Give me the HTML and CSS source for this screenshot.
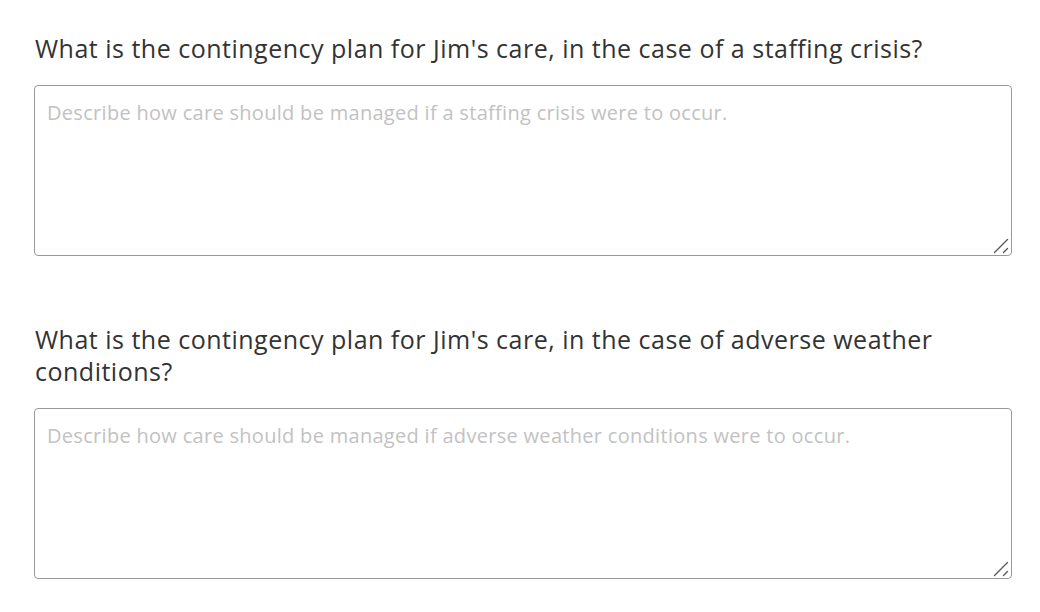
FILE: index.html
```html
<!DOCTYPE html>
<html lang="en">
<head>
<meta charset="utf-8">
<title>Contingency plans</title>
<link rel="stylesheet" href="styles.css">
</head>
<body>
<main class="form">
  <section class="question">
    <label class="q-label" for="q1">What is the contingency plan for Jim's care, in the case of a staffing crisis?</label>
    <div class="field">
      <textarea id="q1" class="q-input" placeholder="Describe how care should be managed if a staffing crisis were to occur."></textarea>
      <svg class="grip" width="16" height="16" viewBox="0 0 16 16" aria-hidden="true"><path d="M1.5 14.5 L14.5 1.5 M10.5 14.5 L14.5 10.5" stroke="#5a5a5a" stroke-width="1.4" stroke-linecap="round" fill="none"/></svg>
    </div>
  </section>
  <section class="question">
    <label class="q-label" for="q2">What is the contingency plan for Jim's care, in the case of adverse weather conditions?</label>
    <div class="field">
      <textarea id="q2" class="q-input" placeholder="Describe how care should be managed if adverse weather conditions were to occur."></textarea>
      <svg class="grip" width="16" height="16" viewBox="0 0 16 16" aria-hidden="true"><path d="M1.5 14.5 L14.5 1.5 M10.5 14.5 L14.5 10.5" stroke="#5a5a5a" stroke-width="1.4" stroke-linecap="round" fill="none"/></svg>
    </div>
  </section>
</main>
</body>
</html>
```
FILE: styles.css
```css
html, body {
  margin: 0;
  padding: 0;
  background: #ffffff;
}
body {
  font-family: "Open Sans", "Liberation Sans", sans-serif;
  color: #333333;
}
.form {
  padding: 32px 28px 0 34px;
  display: flex;
  flex-direction: column;
  gap: 67px;
}
.question {
  display: flex;
  flex-direction: column;
  gap: 21px;
}
.q-label {
  font-size: 25px;
  line-height: 32px;
  letter-spacing: 0.5px;
  padding-left: 1px;
  color: #333333;
}
.field {
  position: relative;
  width: 978px;
  height: 171px;
}
.q-input {
  display: block;
  box-sizing: border-box;
  width: 100%;
  height: 100%;
  margin: 0;
  padding: 14px 12px;
  border: 1px solid #999999;
  border-radius: 4px;
  font-family: inherit;
  font-size: 20px;
  line-height: 26px;
  letter-spacing: 0.3px;
  color: #333333;
  resize: none;
}
.q-input::placeholder {
  color: #c2c2c2;
}
.grip {
  position: absolute;
  right: 3px;
  bottom: 2px;
  pointer-events: none;
}
```
